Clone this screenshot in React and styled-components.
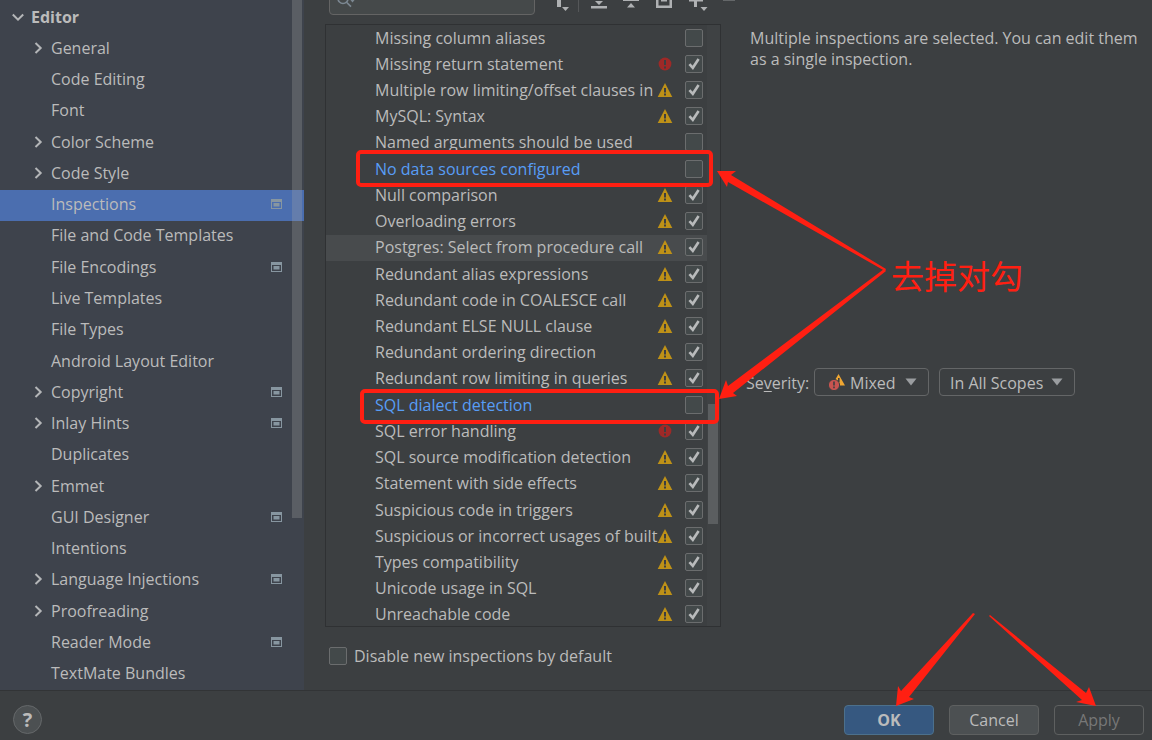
import { useState } from 'react';
import styled, { createGlobalStyle, css } from 'styled-components';

const RED = '#ff1f12';

const GlobalStyle = createGlobalStyle`
  * {
    box-sizing: border-box;
  }

  body {
    margin: 0;
    background: #3c3f41;
    color: #bbbbbb;
    font: 16px/22px "Open Sans", "Noto Sans", "Noto Sans CJK SC", sans-serif;
  }

  button, input, select {
    font: inherit;
    color: inherit;
  }
`;

const Page = styled.div`
  position: relative;
  display: flex;
  flex-direction: column;
  min-height: 100vh;
`;

const Body = styled.div`
  display: flex;
  flex: 1;
`;

const Sidebar = styled.nav`
  position: relative;
  flex: 0 0 304px;
  display: flex;
  flex-direction: column;
  padding-top: 2px;
  background: #3e434c;
`;

const SidebarThumb = styled.div`
  position: absolute;
  top: 0;
  right: 2px;
  width: 10px;
  height: 75%;
  background: rgba(166, 166, 166, 0.28);
`;

const NavItem = styled.a`
  flex: 1;
  display: flex;
  align-items: center;
  min-height: 31px;
  padding: 0 22px 2px ${({ $root }) => ($root ? 11 : 31)}px;
  color: inherit;
  font-weight: ${({ $root }) => ($root ? 700 : 400)};
  text-decoration: none;
  background: ${({ $selected }) => ($selected ? '#4b6eaf' : 'transparent')};
`;

const Arrow = styled.svg`
  width: 14px;
  height: 14px;
  margin-right: 6px;
  fill: none;
  stroke: #b4b6b8;
  stroke-width: 2;
`;

const NavLabel = styled.span`
  flex: 1;
`;

const ScopeIcon = styled.svg`
  width: 11px;
  height: 10px;
`;

const Main = styled.main`
  flex: 1;
  display: flex;
  flex-direction: column;
  min-width: 0;
`;

const Toolbar = styled.div`
  display: flex;
  align-items: flex-end;
  gap: 8px;
  height: 15px;
  padding-left: 25px;
  overflow: hidden;
`;

const Search = styled.div`
  display: flex;
  align-items: center;
  width: 206px;
  height: 30px;
  margin-right: 7px;
  padding: 0 6px;
  border: 1px solid #646464;
  border-radius: 4px;
  background: #45494a;
`;

const SearchInput = styled.input`
  flex: 1;
  min-width: 0;
  border: 0;
  outline: 0;
  background: none;
`;

const ToolButton = styled.button`
  flex: none;
  height: 24px;
  margin-bottom: 3px;
  padding: 0;
  border: 0;
  background: none;
  opacity: ${({ disabled }) => (disabled ? 0.35 : 1)};

  svg {
    display: block;
    width: 24px;
    height: 24px;
    overflow: visible;
    fill: #afb1b3;
  }
`;

const Separator = styled.span`
  width: 1px;
  height: 24px;
  margin: 0 0 3px -4px;
  background: #555759;
`;

const Content = styled.div`
  flex: 1;
  display: flex;
  padding: 9px 12px 0 21px;
`;

const ListPanel = styled.div`
  position: relative;
  flex: 0 0 396px;
  display: flex;
  overflow: hidden;
  border: 1px solid #2f3133;
`;

const List = styled.ul`
  flex: 1;
  display: flex;
  flex-direction: column;
  min-width: 0;
  margin: 0 0 -2px;
  padding: 0;
  list-style: none;
`;

const Track = styled.div`
  display: flex;
  flex-direction: column;
  justify-content: flex-end;
  width: 13px;
  padding: 0 2px 102px 1px;
  background: #3f4244;
`;

const Thumb = styled.div`
  height: 120px;
  background: #5b5e60;
`;

const Row = styled.li`
  flex: 1;
  display: flex;
  align-items: center;
  min-height: 26px;
  padding: 0 4px 1px 49px;
  background: ${({ $hover }) => ($hover ? '#484b4d' : 'transparent')};
`;

const RowLabel = styled.label`
  flex: 1;
  min-width: 0;
  white-space: nowrap;
  color: ${({ $changed }) => ($changed ? '#589df6' : 'inherit')};
`;

const Level = styled.span`
  flex: none;
  display: flex;
  width: 16px;
  margin: 0 12px 0 4px;

  svg {
    width: 16px;
    height: 16px;
  }
`;

const CheckBox = styled.span`
  flex: none;
  display: grid;
  width: 18px;
  height: 18px;

  input, svg {
    grid-area: 1 / 1;
    width: 18px;
    height: 18px;
    margin: 0;
  }

  input {
    appearance: none;
    border: 1px solid #6b6d6e;
    border-radius: 2px;
    background: #43494a;
  }

  svg {
    pointer-events: none;
    fill: none;
    stroke: #b8babb;
    stroke-width: 2.6;
  }
`;

const DisableRow = styled.div`
  display: flex;
  align-items: center;
  gap: 7px;
  height: 63px;
  padding: 0 0 5px 25px;
`;

const Details = styled.section`
  flex: 1;
  min-width: 0;
  padding: 4px 0 0 25px;
`;

const Message = styled.p`
  margin: 0 0 298px 4px;
  line-height: 21px;
`;

const SeverityRow = styled.div`
  display: flex;
  align-items: center;
`;

const SeverityLabel = styled.label`
  width: 63px;
  margin-right: 5px;
  padding-top: 2px;
`;

const Mnemonic = styled.u`
  text-underline-offset: 2px;
`;

const Combo = styled.div`
  display: flex;
  align-items: center;
  width: ${({ $width }) => $width}px;
  height: 28px;
  margin-right: 10px;
  padding: 0 11px 0 ${({ $icon }) => ($icon ? 13 : 10)}px;
  border: 1px solid #646667;
  border-radius: 4px;

  select {
    flex: 1;
    min-width: 0;
    padding: 2px 0 0;
    border: 0;
    outline: 0;
    appearance: none;
    background: none;
  }

  svg {
    flex: none;
  }
`;

const MixedIcon = styled.svg`
  width: 18px;
  height: 18px;
  margin-right: 4px;
`;

const Footer = styled.footer`
  display: flex;
  align-items: center;
  gap: 15px;
  height: 50px;
  padding: 8px 8px 0 13px;
  border-top: 1px solid #323436;
`;

const HelpButton = styled.button`
  width: 29px;
  height: 29px;
  margin-right: auto;
  padding: 0;
  border: 1px solid #65686a;
  border-radius: 50%;
  background: #4c5052;
  font-size: 20px;
  font-weight: 700;
  line-height: 26px;
`;

const Button = styled.button`
  width: 90px;
  height: 30px;
  padding: 0;
  border: 1px solid #5e6060;
  border-radius: 4px;
  background: #4c5052;

  ${({ $primary }) => $primary && css`
    border-color: #4c708c;
    background: #365880;
    font-weight: 700;
  `}

  &:disabled {
    background: transparent;
    color: #777777;
  }
`;

const Marks = styled.svg`
  position: absolute;
  top: 0;
  left: 0;
  width: 1152px;
  height: 740px;
  pointer-events: none;
  fill: ${RED};
`;

const Note = styled.div`
  position: absolute;
  top: 253px;
  left: 891px;
  color: ${RED};
  font-family: "Noto Sans CJK SC", sans-serif;
  font-size: 33px;
  line-height: 44px;
`;

const NAV = [
  { name: 'Editor', root: true },
  { name: 'General', group: true },
  { name: 'Code Editing' },
  { name: 'Font' },
  { name: 'Color Scheme', group: true },
  { name: 'Code Style', group: true },
  { name: 'Inspections', scoped: true, selected: true },
  { name: 'File and Code Templates' },
  { name: 'File Encodings', scoped: true },
  { name: 'Live Templates' },
  { name: 'File Types' },
  { name: 'Android Layout Editor' },
  { name: 'Copyright', group: true, scoped: true },
  { name: 'Inlay Hints', group: true, scoped: true },
  { name: 'Duplicates' },
  { name: 'Emmet', group: true },
  { name: 'GUI Designer', scoped: true },
  { name: 'Intentions' },
  { name: 'Language Injections', group: true, scoped: true },
  { name: 'Proofreading', group: true },
  { name: 'Reader Mode', scoped: true },
  { name: 'TextMate Bundles' },
];

const INSPECTIONS = [
  { name: 'Missing column aliases' },
  { name: 'Missing return statement', level: 'error' },
  { name: 'Multiple row limiting/offset clauses in', level: 'warning' },
  { name: 'MySQL: Syntax', level: 'warning' },
  { name: 'Named arguments should be used' },
  { name: 'No data sources configured', changed: true },
  { name: 'Null comparison', level: 'warning' },
  { name: 'Overloading errors', level: 'warning' },
  { name: 'Postgres: Select from procedure call', level: 'warning', hover: true },
  { name: 'Redundant alias expressions', level: 'warning' },
  { name: 'Redundant code in COALESCE call', level: 'warning' },
  { name: 'Redundant ELSE NULL clause', level: 'warning' },
  { name: 'Redundant ordering direction', level: 'warning' },
  { name: 'Redundant row limiting in queries', level: 'warning' },
  { name: 'SQL dialect detection', changed: true },
  { name: 'SQL error handling', level: 'error' },
  { name: 'SQL source modification detection', level: 'warning' },
  { name: 'Statement with side effects', level: 'warning' },
  { name: 'Suspicious code in triggers', level: 'warning' },
  { name: 'Suspicious or incorrect usages of built', level: 'warning' },
  { name: 'Types compatibility', level: 'warning' },
  { name: 'Unicode usage in SQL', level: 'warning' },
  { name: 'Unreachable code', level: 'warning' },
];

function LevelIcon({ level }) {
  if (level === 'error') {
    return (
      <svg viewBox="0 0 16 16">
        <circle cx="8" cy="8" r="6.4" fill="#9e2927" />
        <path d="M7 4h2v5H7zM7 10.4h2v2H7z" fill="#3c3f41" />
      </svg>
    );
  }
  return (
    <svg viewBox="0 0 16 16">
      <path d="M8 1L15.3 15H.7z" fill="#be9117" />
      <path d="M7 6h2v4.4H7zM7 11.6h2v2H7z" fill="#3c3f41" />
    </svg>
  );
}

function Check({ id, defaultChecked }) {
  const [checked, setChecked] = useState(Boolean(defaultChecked));

  return (
    <CheckBox>
      <input id={id} type="checkbox" checked={checked} onChange={() => setChecked(!checked)} />
      {checked && (
        <svg viewBox="0 0 18 18">
          <path d="M4.4 9.2L7.8 12.8L13.6 4" />
        </svg>
      )}
    </CheckBox>
  );
}

function Caret() {
  return (
    <svg width="12" height="8" viewBox="0 0 12 8">
      <path d="M.5.5h11L6 7.5z" fill="#9a9da0" />
    </svg>
  );
}

export default function App() {
  return (
    <Page>
      <GlobalStyle />
      <Body>
        <Sidebar>
          {NAV.map(({ name, root, group, scoped, selected }) => (
            <NavItem href="#" key={name} $root={root} $selected={selected}>
              <Arrow viewBox="0 0 14 14">
                {root && <path d="M1.8 4.5L7 9.7L12.2 4.5" />}
                {group && <path d="M4.5 2L9.7 7L4.5 12" />}
              </Arrow>
              <NavLabel>{name}</NavLabel>
              {scoped && (
                <ScopeIcon viewBox="0 0 11 10">
                  <path d="M0 0h11v10H0z" fill="#8796a0" />
                  <path d="M1 3h9v6H1z" fill={selected ? '#4b6eaf' : '#3e434c'} />
                  <path d="M2.5 4h6v3.5h-6z" fill="#8796a0" />
                </ScopeIcon>
              )}
            </NavItem>
          ))}
          <SidebarThumb />
        </Sidebar>
        <Main>
          <Toolbar>
            <Search>
              <svg width="20" height="16" viewBox="0 0 20 16" fill="none" stroke="#7c8892" strokeWidth="1.6">
                <circle cx="7" cy="6.5" r="5" />
                <path d="M10.5 10.2L15 14.6" />
                <path d="M14 7.5h5l-2.5 3z" fill="#7c8892" stroke="none" />
              </svg>
              <SearchInput aria-label="Search inspections" />
            </Search>
            <ToolButton aria-label="Filter">
              <svg viewBox="0 0 24 24"><path d="M1 3h16l-6 8v8H7v-8zM12 19h7l-3.5 4z" /></svg>
            </ToolButton>
            <Separator />
            <ToolButton aria-label="Expand all">
              <svg viewBox="0 0 24 24"><path d="M4 4h16v2H4zM8 13h8l-4 4zM4 18h16v2.5H4z" /></svg>
            </ToolButton>
            <ToolButton aria-label="Collapse all">
              <svg viewBox="0 0 24 24"><path d="M4 10.5h16V13H4zM12 15l4 4.5H8z" /></svg>
            </ToolButton>
            <ToolButton aria-label="Reset">
              <svg viewBox="0 0 24 24"><path d="M5 4h16v16H5zM7.5 6.5v11h11v-11z" fillRule="evenodd" /><path d="M10 11h6v2.500h-6z" /></svg>
            </ToolButton>
            <ToolButton aria-label="Add">
              <svg viewBox="0 0 24 24"><path d="M11 5h3v6h6v2.500h-6V19h-3v-5.500H6V11h5zM17.500 19h7L21 23z" /></svg>
            </ToolButton>
            <ToolButton aria-label="Remove" disabled>
              <svg viewBox="0 0 24 24"><path d="M8 11h12v2H8z" /></svg>
            </ToolButton>
          </Toolbar>
          <Content>
            <ListPanel>
              <List>
                {INSPECTIONS.map(({ name, level, changed, hover }, i) => (
                  <Row key={name} $hover={hover}>
                    <RowLabel htmlFor={`inspection-${i}`} $changed={changed}>{name}</RowLabel>
                    <Level>{level && <LevelIcon level={level} />}</Level>
                    <Check id={`inspection-${i}`} defaultChecked={level} />
                  </Row>
                ))}
              </List>
              <Track>
                <Thumb />
              </Track>
            </ListPanel>
            <Details>
              <Message>
                Multiple inspections are selected. You can edit them as a single inspection.
              </Message>
              <SeverityRow>
                <SeverityLabel htmlFor="severity">Se<Mnemonic>v</Mnemonic>erity:</SeverityLabel>
                <Combo $width={115} $icon>
                  <MixedIcon viewBox="0 0 18 18">
                    <path d="M10.5 1L17 12.5H9L6.5 8z" fill="#f0a732" />
                    <path d="M10 5h1.6v4H10z" fill="#3c3f41" />
                    <circle cx="6" cy="12" r="5.6" fill="#c75450" stroke="#3c3f41" />
                    <path d="M5.2 8.5h1.6v4H5.200zM5.200 13.500h1.600v1.700H5.200z" fill="#3c3f41" />
                  </MixedIcon>
                  <select id="severity">
                    <option>Mixed</option>
                  </select>
                  <Caret />
                </Combo>
                <Combo $width={136}>
                  <select aria-label="Scope">
                    <option>In All Scopes</option>
                  </select>
                  <Caret />
                </Combo>
              </SeverityRow>
            </Details>
          </Content>
          <DisableRow>
            <Check id="disable-new" />
            <label htmlFor="disable-new">Disable new inspections by default</label>
          </DisableRow>
        </Main>
      </Body>
      <Footer>
        <HelpButton aria-label="Help">?</HelpButton>
        <Button $primary>OK</Button>
        <Button>Cancel</Button>
        <Button disabled>Apply</Button>
      </Footer>
      <Marks viewBox="0 0 1152 740">
        <rect x="358" y="152" width="353" height="33" rx="3" fill="none" stroke={RED} strokeWidth="4" />
        <rect x="362" y="391" width="355" height="31" rx="3" fill="none" stroke={RED} strokeWidth="4" />
        <path d="M717 171L736 171L731 175L886 269L885 271L728 182L727 187Z" />
        <path d="M719 399L726 380L728 386L884 269L886 271L733 393L737 396Z" />
        <path d="M896 706L898 686L901 691L973 613L975 614L909 697L914 699Z" />
        <path d="M1096 706L1089 687L1086 693L990 615L989 616L1082 700L1076 702Z" />
      </Marks>
      <Note>去掉对勾</Note>
    </Page>
  );
}
